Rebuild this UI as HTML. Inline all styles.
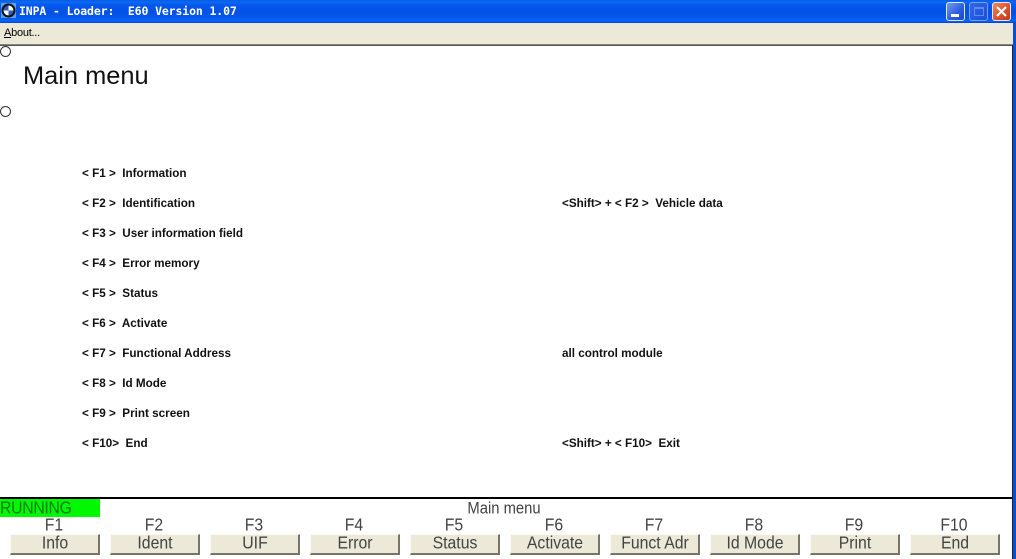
<!DOCTYPE html>
<html><head><meta charset="utf-8">
<style>
html,body{margin:0;padding:0;background:#fff;}
#w{position:relative;width:1016px;height:559px;overflow:hidden;background:#fff;font-family:"Liberation Sans",sans-serif;color:#000;}
.a{position:absolute;white-space:pre;}
#tb{left:0;top:0;width:1016px;height:23px;background:linear-gradient(180deg,#0a5be0 0,#0a6af4 2px,#0558ec 5px,#0350e4 12px,#0558ee 18px,#0a64f4 21px,#0340d0 23px);}
#tt{left:19px;top:3px;font:bold 11.5px/16px "DejaVu Sans Mono","Liberation Mono",monospace;color:#fff;letter-spacing:-.12px;}
#mb{left:0;top:23px;width:1013px;height:21px;background:#ece9d8;}
#ln{left:0;top:44px;width:1013px;height:1px;background:#8a887c;}
#ln2{left:0;top:45px;width:1013px;height:1px;background:#555;}
#about{left:4px;top:26px;font:11px/14px "Liberation Sans",sans-serif;color:#000;letter-spacing:-.25px;}
#rb{left:1013px;top:23px;width:3px;height:536px;background:#0a4ddc;}
#rb2{left:1012px;top:45px;width:1px;height:514px;background:#222;}
.c{width:9px;height:9px;border:1px solid #333;border-radius:50%;background:#fff;left:0;}
#h{left:23px;top:61px;font:25.400px/30px "Liberation Sans",sans-serif;color:#111;}
.t{font:bold 11.700px/14px "Liberation Sans",sans-serif;color:#111;}
#bl{left:0;top:497px;width:1012px;height:2px;background:#000;}
#g{left:0;top:499px;width:100px;height:18px;background:#00f800;}
.m{font:15.800px/18px "Liberation Sans",sans-serif;color:#444;transform:scaleY(1.120);transform-origin:50% 50%;}
.f{width:100px;text-align:center;top:517px;}
.b{width:90px;height:21px;top:534px;box-sizing:border-box;background:#ece9d8;border-top:1px solid #fbfaf4;border-left:1px solid #fbfaf4;border-right:2px solid #77756a;border-bottom:2px solid #77756a;}
.l{width:90px;text-align:center;top:535px;}
.wb{top:2px;width:19px;height:19px;border:1px solid #dfe8fb;border-radius:3px;box-sizing:border-box;}
</style></head><body><div id="w">
<div class="a" id="tb"></div>
<svg class="a" style="left:1px;top:2px" width="16" height="18" viewBox="0 0 16 18">
<rect x="0" y="1" width="15" height="15" fill="#58a0e8"/>
<circle cx="7.500" cy="8.500" r="7" fill="#111"/>
<path d="M7.500 8.500V3.500A5 5 0 0 1 12.500 8.500Z" fill="#fff"/>
<path d="M7.500 8.500V13.500A5 5 0 0 1 2.500 8.500Z" fill="#fff"/>
<path d="M7.500 8.500H12.500A5 5 0 0 1 7.500 13.500Z" fill="#2a5fc0"/>
<path d="M7.500 8.500H2.500A5 5 0 0 1 7.500 3.500Z" fill="#2a5fc0"/>
</svg>
<div class="a" id="tt">INPA - Loader:  E60 Version 1.07</div>
<div class="a wb" style="left:946px;background:linear-gradient(135deg,#6f9cf0,#2a5be0 60%,#1c48cc)"></div>
<div class="a" style="left:951px;top:14px;width:8px;height:3px;background:#fff"></div>
<div class="a wb" style="left:969px;background:linear-gradient(135deg,#2f67e6,#1a4fdc);border-color:#7a9fee"></div>
<div class="a" style="left:974px;top:7px;width:10px;height:9px;border:1px solid #5f8ae8;border-top:2px solid #5f8ae8;box-sizing:border-box"></div>
<div class="a wb" style="left:992px;background:linear-gradient(135deg,#ee8a60,#d9502a 60%,#c03a18)"></div>
<svg class="a" style="left:992px;top:2px" width="19" height="19" viewBox="0 0 19 19"><path d="M5 5L14 14M14 5L5 14" stroke="#fff" stroke-width="2.200" fill="none"/></svg>
<div class="a" id="mb"></div>
<div class="a" id="about"><u>A</u>bout...</div>
<div class="a" id="ln"></div><div class="a" id="ln2"></div>
<div class="a" id="rb"></div><div class="a" id="rb2"></div>
<div class="a c" style="top:46px"></div>
<div class="a c" style="top:106px"></div>
<div class="a" id="h">Main menu</div>
<div class="a t" style="left:82px;top:167px">&lt; F1 &gt;  Information</div>
<div class="a t" style="left:82px;top:197px">&lt; F2 &gt;  Identification</div>
<div class="a t" style="left:82px;top:227px">&lt; F3 &gt;  User information field</div>
<div class="a t" style="left:82px;top:257px">&lt; F4 &gt;  Error memory</div>
<div class="a t" style="left:82px;top:287px">&lt; F5 &gt;  Status</div>
<div class="a t" style="left:82px;top:317px">&lt; F6 &gt;  Activate</div>
<div class="a t" style="left:82px;top:347px">&lt; F7 &gt;  Functional Address</div>
<div class="a t" style="left:82px;top:377px">&lt; F8 &gt;  Id Mode</div>
<div class="a t" style="left:82px;top:407px">&lt; F9 &gt;  Print screen</div>
<div class="a t" style="left:82px;top:437px">&lt; F10&gt;  End</div>
<div class="a t" style="left:562px;top:197px">&lt;Shift&gt; + &lt; F2 &gt;  Vehicle data</div>
<div class="a t" style="left:562px;top:347px">all control module</div>
<div class="a t" style="left:562px;top:437px">&lt;Shift&gt; + &lt; F10&gt;  Exit</div>
<div class="a" id="bl"></div>
<div class="a" id="g"></div>
<div class="a m" style="left:0;top:500px;color:#0a7a10;letter-spacing:-.3px">RUNNING</div>
<div class="a m" style="left:404px;top:500px;width:200px;text-align:center;font-size:14.800px">Main menu</div>
<div class="a m f" style="left:4px">F1</div><div class="a b" style="left:10px"></div><div class="a m l" style="left:10px">Info</div>
<div class="a m f" style="left:104px">F2</div><div class="a b" style="left:110px"></div><div class="a m l" style="left:110px">Ident</div>
<div class="a m f" style="left:204px">F3</div><div class="a b" style="left:210px"></div><div class="a m l" style="left:210px">UIF</div>
<div class="a m f" style="left:304px">F4</div><div class="a b" style="left:310px"></div><div class="a m l" style="left:310px">Error</div>
<div class="a m f" style="left:404px">F5</div><div class="a b" style="left:410px"></div><div class="a m l" style="left:410px">Status</div>
<div class="a m f" style="left:504px">F6</div><div class="a b" style="left:510px"></div><div class="a m l" style="left:510px">Activate</div>
<div class="a m f" style="left:604px">F7</div><div class="a b" style="left:610px"></div><div class="a m l" style="left:610px">Funct Adr</div>
<div class="a m f" style="left:704px">F8</div><div class="a b" style="left:710px"></div><div class="a m l" style="left:710px">Id Mode</div>
<div class="a m f" style="left:804px">F9</div><div class="a b" style="left:810px"></div><div class="a m l" style="left:810px">Print</div>
<div class="a m f" style="left:904px">F10</div><div class="a b" style="left:910px"></div><div class="a m l" style="left:910px">End</div>
</div></body></html>
